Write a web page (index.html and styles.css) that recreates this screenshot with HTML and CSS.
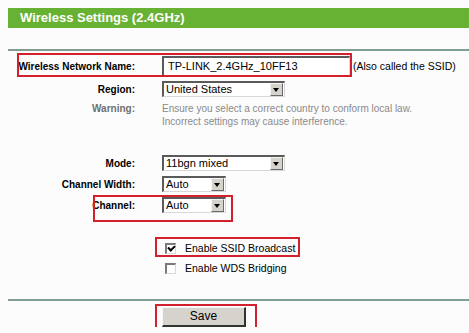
FILE: index.html
```html
<!DOCTYPE html>
<html>
<head>
<meta charset="utf-8">
<link rel="stylesheet" href="styles.css">
</head>
<body>
<div class="page">
  <div class="title">Wireless Settings (2.4GHz)</div>
  <div class="rule rule-top"></div>

  <div class="row row-ssid">
    <div class="label">Wireless Network Name:</div>
    <div class="ctrl">
      <div class="textbox">TP-LINK_2.4GHz_10FF13</div>
      <span class="note">(Also called the SSID)</span>
    </div>
  </div>

  <div class="row row-tight">
    <div class="label">Region:</div>
    <div class="ctrl">
      <div class="select wide"><span class="val">United States</span><span class="arrow"></span></div>
    </div>
  </div>

  <div class="row row-warning">
    <div class="label muted">Warning:</div>
    <div class="ctrl warn-text">Ensure you select a correct country to conform local law.<br>Incorrect settings may cause interference.</div>
  </div>

  <div class="row row-mode">
    <div class="label">Mode:</div>
    <div class="ctrl">
      <div class="select wide"><span class="val">11bgn mixed</span><span class="arrow"></span></div>
    </div>
  </div>

  <div class="row row-tight">
    <div class="label">Channel Width:</div>
    <div class="ctrl">
      <div class="select narrow"><span class="val">Auto</span><span class="arrow"></span></div>
    </div>
  </div>

  <div class="row row-tight">
    <div class="label">Channel:</div>
    <div class="ctrl">
      <div class="select narrow"><span class="val">Auto</span><span class="arrow"></span></div>
    </div>
  </div>

  <div class="row row-check first-check">
    <div class="label"></div>
    <div class="ctrl check-line"><span class="box checked"></span><span>Enable SSID Broadcast</span></div>
  </div>

  <div class="row row-check">
    <div class="label"></div>
    <div class="ctrl check-line"><span class="box"></span><span>Enable WDS Bridging</span></div>
  </div>

  <div class="rule rule-bottom"></div>

  <div class="row row-save">
    <div class="label"></div>
    <div class="ctrl"><div class="button">Save</div></div>
  </div>

  <div class="mark mark-ssid"></div>
  <div class="mark mark-channel"></div>
  <div class="mark mark-broadcast"></div>
  <div class="mark mark-save"></div>
</div>
</body>
</html>
```

FILE: styles.css
```css
html, body {
  margin: 0;
  padding: 0;
  background: #fcfcfc;
}
body {
  padding: 8px 0 0 8px;
  font-family: "Liberation Sans", Arial, sans-serif;
  color: #000;
}
.page {
  position: relative;
  width: 461px;
}
.title {
  height: 20px;
  line-height: 20px;
  background: #67b133;
  color: #fff;
  font-weight: bold;
  font-size: 13px;
  padding-left: 12px;
}
.rule {
  height: 2px;
  background: #7f9d93;
}
.rule-top { margin-top: 21px; }
.rule-bottom { margin-top: 23px; }

.row {
  display: flex;
  align-items: center;
  margin-top: 5px;
}
.row-ssid { height: 20px; }
.row-tight { height: 16px; }
.row-mode { margin-top: 27px; height: 16px; }
.row-warning { align-items: flex-start; }
.first-check { margin-top: 27px; }
.row-check { height: 16px; }
.row-check + .row-check { margin-top: 4px; }
.row-save { margin-top: 6px; }

.label {
  width: 127px;
  flex: none;
  text-align: right;
  font-weight: bold;
  font-size: 10px;
  margin-right: 27px;
  white-space: nowrap;
}
.label.muted { color: #6f6f6f; line-height: 13px; }
.ctrl {
  display: flex;
  align-items: center;
  font-size: 11px;
}
.textbox {
  box-sizing: border-box;
  width: 188px;
  height: 20px;
  line-height: 17px;
  padding-left: 4px;
  background: #fff;
  border-top: 2px solid #5a5a5a;
  border-left: 2px solid #5a5a5a;
  border-right: 1px solid #d8d8d8;
  border-bottom: 1px solid #d8d8d8;
  font-size: 11px;
}
.note {
  margin-left: 3px;
  font-size: 10.5px;
}
.warn-text {
  display: block;
  color: #8a8a8a;
  font-size: 10px;
  line-height: 13px;
}
.select {
  box-sizing: border-box;
  height: 16px;
  display: flex;
  align-items: center;
  background: #fff;
  border-top: 2px solid #5a5a5a;
  border-left: 2px solid #5a5a5a;
  border-right: 1px solid #d8d8d8;
  border-bottom: 1px solid #d8d8d8;
}
.select.wide { width: 123px; }
.select.narrow { width: 64px; }
.select .val {
  flex: 1;
  padding-left: 2px;
  font-size: 11px;
  line-height: 13px;
}
.select .arrow {
  position: relative;
  width: 11px;
  height: 11px;
  margin-right: 1px;
  background: #d6d3cc;
  border-top: 1px solid #f4f4f4;
  border-left: 1px solid #f4f4f4;
  border-right: 1px solid #6a6a6a;
  border-bottom: 1px solid #6a6a6a;
}
.select .arrow::after {
  content: "";
  position: absolute;
  left: 2px;
  top: 4px;
  border-left: 3.5px solid transparent;
  border-right: 3.5px solid transparent;
  border-top: 4px solid #000;
}
.check-line {
  font-size: 10.5px;
  padding-left: 3px;
}
.box {
  box-sizing: border-box;
  width: 11px;
  height: 11px;
  margin-right: 9px;
  background: #fff;
  border-top: 2px solid #7a7a7a;
  border-left: 2px solid #7a7a7a;
  border-right: 1px solid #d8d8d8;
  border-bottom: 1px solid #d8d8d8;
  position: relative;
}
.box.checked::after {
  content: "";
  position: absolute;
  left: 1px;
  top: 0px;
  width: 5px;
  height: 3px;
  border-left: 2px solid #000;
  border-bottom: 2px solid #000;
  transform: rotate(-45deg);
}
.button {
  box-sizing: border-box;
  width: 84px;
  height: 20px;
  line-height: 17px;
  text-align: center;
  background: #d6d3cc;
  border-top: 1px solid #f6f6f6;
  border-left: 1px solid #f6f6f6;
  border-right: 2px solid #333;
  border-bottom: 2px solid #333;
  font-size: 12px;
}
.mark {
  position: absolute;
  box-sizing: border-box;
  border: 2px solid #d2202c;
}
.mark-ssid { left: 9px; top: 45px; width: 335px; height: 24px; }
.mark-channel { left: 85px; top: 187px; width: 140px; height: 27px; }
.mark-broadcast { left: 147px; top: 229px; width: 145px; height: 20px; }
.mark-save { left: 147px; top: 296px; width: 102px; height: 25px; }
```
